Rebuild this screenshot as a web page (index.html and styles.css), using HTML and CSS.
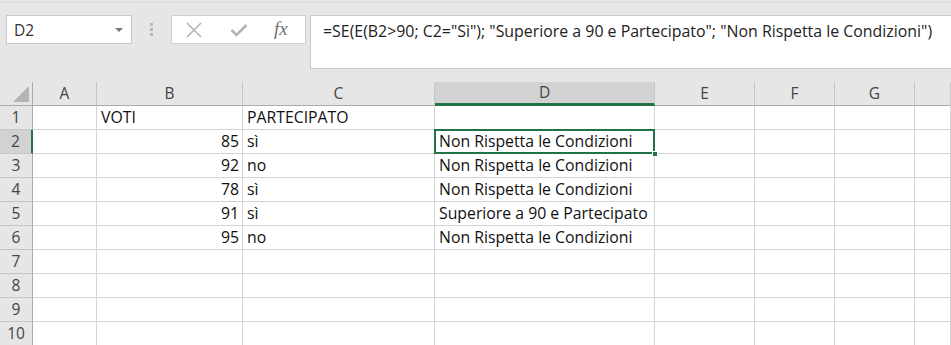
FILE: index.html
```html
<!DOCTYPE html>
<html lang="it">
<head>
<meta charset="utf-8">
<title>Excel</title>
<link rel="stylesheet" href="styles.css">
</head>
<body>
<div class="toolbar">
  <div class="namebox"><span class="ref">D2</span><span class="caret"></span></div>
  <div class="grip"><i></i><i></i><i></i></div>
  <div class="buttons">
    <svg class="ico" width="18" height="16" viewBox="0 0 18 16"><path d="M2 1 L16 15 M16 1 L2 15" stroke="#b4b4b4" stroke-width="1.6" fill="none"/></svg>
    <svg class="ico" width="18" height="14" viewBox="0 0 18 14"><path d="M1.5 7 L6.5 12 L16.5 2" stroke="#b4b4b4" stroke-width="2.6" fill="none"/></svg>
    <span class="fx">fx</span>
  </div>
  <div class="formula">=SE(E(B2&gt;90; C2="Sì"); "Superiore a 90 e Partecipato"; "Non Rispetta le Condizioni")</div>
</div>
<div class="sheet">
  <div class="corner"><span class="tri"></span></div>
  <div class="ch">A</div><div class="ch">B</div><div class="ch">C</div><div class="ch active">D</div><div class="ch">E</div><div class="ch">F</div><div class="ch">G</div><div class="ch"></div>

  <div class="rh">1</div><div class="c"></div><div class="c">VOTI</div><div class="c">PARTECIPATO</div><div class="c"></div><div class="c"></div><div class="c"></div><div class="c"></div><div class="c"></div>

  <div class="rh active">2</div><div class="c"></div><div class="c num">85</div><div class="c">sì</div><div class="c sel">Non Rispetta le Condizioni<span class="selbox"></span><span class="handle"></span></div><div class="c"></div><div class="c"></div><div class="c"></div><div class="c"></div>

  <div class="rh">3</div><div class="c"></div><div class="c num">92</div><div class="c">no</div><div class="c">Non Rispetta le Condizioni</div><div class="c"></div><div class="c"></div><div class="c"></div><div class="c"></div>

  <div class="rh">4</div><div class="c"></div><div class="c num">78</div><div class="c">sì</div><div class="c">Non Rispetta le Condizioni</div><div class="c"></div><div class="c"></div><div class="c"></div><div class="c"></div>

  <div class="rh">5</div><div class="c"></div><div class="c num">91</div><div class="c">sì</div><div class="c">Superiore a 90 e Partecipato</div><div class="c"></div><div class="c"></div><div class="c"></div><div class="c"></div>

  <div class="rh">6</div><div class="c"></div><div class="c num">95</div><div class="c">no</div><div class="c">Non Rispetta le Condizioni</div><div class="c"></div><div class="c"></div><div class="c"></div><div class="c"></div>

  <div class="rh">7</div><div class="c"></div><div class="c"></div><div class="c"></div><div class="c"></div><div class="c"></div><div class="c"></div><div class="c"></div><div class="c"></div>
  <div class="rh">8</div><div class="c"></div><div class="c"></div><div class="c"></div><div class="c"></div><div class="c"></div><div class="c"></div><div class="c"></div><div class="c"></div>
  <div class="rh">9</div><div class="c"></div><div class="c"></div><div class="c"></div><div class="c"></div><div class="c"></div><div class="c"></div><div class="c"></div><div class="c"></div>
  <div class="rh">10</div><div class="c"></div><div class="c"></div><div class="c"></div><div class="c"></div><div class="c"></div><div class="c"></div><div class="c"></div><div class="c"></div>
</div>
</body>
</html>
```

FILE: styles.css
```css
* { box-sizing: border-box; }
html, body { margin: 0; padding: 0; }
body {
  width: 951px;
  height: 345px;
  overflow: hidden;
  background: #e6e6e6;
  font-family: "Open Sans", "Noto Sans", sans-serif;
  color: #222;
}
.toolbar {
  height: 80px;
  border-top: 1px solid #dadada;
  margin-top: 2px;
  display: flex;
  align-items: flex-start;
  padding: 12px 0 0 6px;
}
.namebox {
  width: 126px;
  height: 29px;
  background: #fff;
  border: 1px solid #c8c8c8;
  display: flex;
  align-items: center;
  justify-content: space-between;
  padding: 0 8px 0 7px;
  font-size: 15.5px;
  color: #333;
}
.caret {
  width: 0; height: 0;
  border-left: 4px solid transparent;
  border-right: 4px solid transparent;
  border-top: 4px solid #777;
  margin-top: 1px;
}
.grip {
  width: 39px;
  height: 29px;
  display: flex;
  flex-direction: column;
  align-items: center;
  justify-content: center;
  gap: 2px;
}
.grip i {
  display: block;
  width: 3px; height: 3px;
  background: #b8b8b8;
}
.buttons {
  width: 135px;
  height: 29px;
  background: #fff;
  border: 1px solid #d0d0d0;
  display: flex;
  align-items: center;
  padding: 0 0 0 13px;
}
.buttons .ico:nth-child(1) { margin-right: 27px; }
.buttons .ico:nth-child(2) { margin-right: 26px; }
.fx {
  font-family: "Liberation Serif", serif;
  font-style: italic;
  font-size: 19px;
  color: #6f6f6f;
  line-height: 1;
  margin-top: -2px;
}
.formula {
  margin-left: 4px;
  flex: 1;
  height: 54px;
  background: #fff;
  border: 1px solid #c8c8c8;
  border-right: none;
  padding: 4px 0 0 12px;
  font-size: 15.9px;
  color: #222;
  white-space: nowrap;
}
.sheet {
  display: grid;
  grid-template-columns: 33px 64px 146px 192px 220px 100px 80px 80px 36px;
  grid-auto-rows: 24px;
  background: #fff;
  font-size: 15.8px;
}
.corner {
  background: #e6e6e6;
  border-right: 1px solid #ababab;
  border-bottom: 1px solid #ababab;
  position: relative;
}
.tri {
  position: absolute;
  right: 3px;
  bottom: 3px;
  width: 0; height: 0;
  border-left: 16px solid transparent;
  border-bottom: 16px solid #b4b4b4;
}
.ch {
  background: #e6e6e6;
  border-right: 1px solid #c6c6c6;
  border-bottom: 1px solid #ababab;
  text-align: center;
  font-size: 15.5px;
  line-height: 23px;
  color: #444;
}
.ch.active {
  background: #d2d2d2;
  border-bottom: 3px solid #217346;
  line-height: 21px;
}
.rh {
  background: #e6e6e6;
  border-right: 1px solid #ababab;
  border-bottom: 1px solid #c6c6c6;
  text-align: center;
  font-size: 15.5px;
  line-height: 23px;
  color: #444;
}
.rh.active {
  background: #d2d2d2;
  border-right: 2px solid #217346;
}
.c {
  border-right: 1px solid #d4d4d4;
  border-bottom: 1px solid #d4d4d4;
  padding: 0 3px 0 4px;
  line-height: 23px;
  white-space: nowrap;
  color: #111;
}
.c.num { text-align: right; padding-right: 3px; }
.sel { position: relative; }
.selbox {
  position: absolute;
  left: -1px; top: -1px; right: -1px; bottom: -1px;
  border: 2px solid #217346;
}
.handle {
  position: absolute;
  right: -4px; bottom: -4px;
  width: 6px; height: 6px;
  background: #217346;
  border: 1px solid #fff;
}
```
